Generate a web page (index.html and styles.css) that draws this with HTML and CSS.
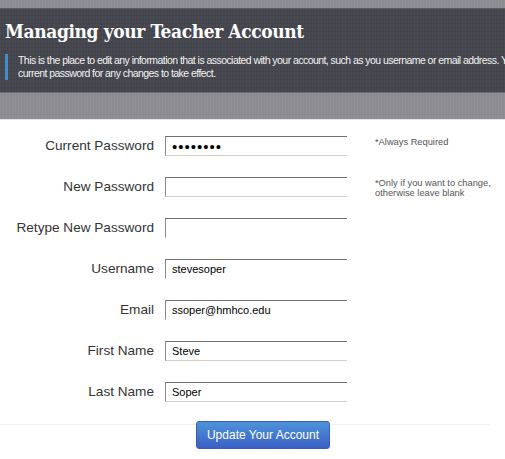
FILE: index.html
```html
<!doctype html>
<html>
<head>
  <link rel="stylesheet" href="styles.css">
</head>
<body>
  <header class="banner">
    <div class="banner-panel">
      <h1>Managing your Teacher Account</h1>
      <p class="intro">This is the place to edit any information that is associated with your account, such as you username or email address. You must enter your<br>current password for any changes to take effect.</p>
    </div>
  </header>

  <form class="account-form" onsubmit="return false">
    <div class="fields">
      <label for="current">Current Password</label>
      <input id="current" class="field secret" type="password" value="password">
      <span class="note">*Always Required</span>

      <label for="newpw">New Password</label>
      <input id="newpw" class="field secret" type="password">
      <span class="note">*Only if you want to change, otherwise leave blank</span>

      <label for="retype">Retype New Password</label>
      <input id="retype" class="field secret open" type="password">
      <span></span>

      <label for="username">Username</label>
      <input id="username" class="field open" type="text" value="stevesoper">
      <span></span>

      <label for="email">Email</label>
      <input id="email" class="field open" type="text" value="ssoper@hmhco.edu">
      <span></span>

      <label for="first">First Name</label>
      <input id="first" class="field" type="text" value="Steve">
      <span></span>

      <label for="last">Last Name</label>
      <input id="last" class="field" type="text" value="Soper">
      <span></span>
    </div>

    <div class="form-footer">
      <button class="btn-update" type="submit">Update Your Account</button>
    </div>
  </form>
</body>
</html>
```

FILE: styles.css
```css
* {
  margin: 0;
  padding: 0;
  box-sizing: border-box;
}

html, body {
  overflow: hidden;
}

body {
  background: #fff;
  font-family: "Liberation Sans", Arial, sans-serif;
  color: #333;
  width: 760px;
}

.banner {
  background-color: #8b8b91;
  background-image: repeating-linear-gradient(90deg, rgba(255,255,255,0.04) 0 1px, transparent 1px 3px);
  padding: 8px 0 26px;
  border-bottom: 1px solid #e6e6e6;
}

.banner-panel {
  background-color: #46474e;
  background-image:
    repeating-linear-gradient(90deg, rgba(255,255,255,0.025) 0 1px, transparent 1px 3px),
    repeating-linear-gradient(0deg, rgba(0,0,0,0.05) 0 1px, transparent 1px 4px);
  border-top: 1px solid #5a5b61;
  border-bottom: 1px solid #6e6e74;
  padding: 8px 0 12px 5px;
}

.banner-panel h1 {
  font-family: "DejaVu Serif Condensed", "DejaVu Serif", serif;
  font-weight: bold;
  font-size: 19px;
  line-height: 28px;
  color: #fff;
  letter-spacing: -0.4px;
  margin-bottom: 9px;
}

.intro {
  border-left: 3px solid #3d8ed2;
  padding-left: 10px;
  font-size: 10.5px;
  line-height: 13px;
  letter-spacing: -0.55px;
  color: #f2f2f2;
  width: 740px;
}

.account-form {
  padding-top: 16px;
}

.fields {
  display: grid;
  grid-template-columns: 154px 182px 1fr;
  grid-auto-rows: 20px;
  column-gap: 11px;
  row-gap: 21px;
}

.fields label {
  text-align: right;
  font-size: 13.6px;
  line-height: 20px;
  color: #333;
}

.field {
  width: 182px;
  height: 20px;
  border: 1px solid;
  border-color: #707070 transparent #d4d0c8 #8a8a8a;
  border-right: none;
  padding: 0 6px;
  font-family: "Liberation Sans", Arial, sans-serif;
  font-size: 11px;
  color: #000;
  outline: none;
}

.field.secret {
  font-size: 15px;
  letter-spacing: 1px;
}

.field.open {
  border-bottom-color: transparent;
}

.note {
  font-size: 9.3px;
  line-height: 10px;
  color: #555;
  margin-left: 17px;
  width: 130px;
  padding-top: 1px;
}

.form-footer {
  margin-top: 22px;
  width: 490px;
  border-top: 1px solid #f0f0f0;
  padding-left: 196px;
}

.btn-update {
  margin-top: -4px;
  width: 134px;
  height: 28px;
  border: 1px solid #3a5bb8;
  border-radius: 3px;
  background: linear-gradient(#4c93d8, #3c60c6);
  color: #fff;
  font-family: "Liberation Sans", Arial, sans-serif;
  font-size: 12px;
  cursor: pointer;
}
```
